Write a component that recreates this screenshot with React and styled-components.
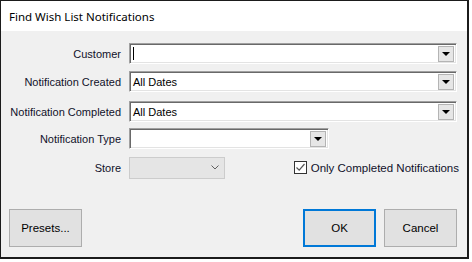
import React from 'react';
import styled, { createGlobalStyle } from 'styled-components';

const GlobalStyle = createGlobalStyle`
  html, body {
    margin: 0;
    padding: 0;
    background: #ffffff;
  }
  body {
    font-family: 'Liberation Sans', Arial, sans-serif;
  }
`;

const Window = styled.div`
  box-sizing: border-box;
  width: 469px;
  height: 259px;
  border: 1px solid #1b1b1b;
  border-right-width: 2px;
  border-bottom-width: 2px;
  background: #f0f0f0;
  display: flex;
  flex-direction: column;
`;

const TitleBar = styled.div`
  height: 30px;
  background: #ffffff;
  display: flex;
  align-items: center;
  padding-left: 8px;
  font-family: 'Noto Sans', 'Liberation Sans', sans-serif;
  font-size: 11.5px;
  color: #000;
`;

const Body = styled.div`
  flex: 1;
  display: flex;
  flex-direction: column;
  padding: 12px 10px 10px 0;
`;

const Row = styled.div`
  display: flex;
  align-items: center;
  height: 21px;
  margin-top: ${({ $top }) => $top || 0}px;
`;

const Label = styled.div`
  width: 120px;
  margin-right: 8px;
  text-align: right;
  font-size: 11px;
  color: #10102a;
  white-space: nowrap;
`;

const Combo = styled.div`
  box-sizing: border-box;
  width: ${({ $width }) => $width}px;
  height: 21px;
  background: #ffffff;
  border: 1px solid;
  border-color: #a0a0a0 #ffffff #ffffff #a0a0a0;
  box-shadow: inset 1px 1px 0 #696969, inset -1px -1px 0 #e3e3e3;
  display: flex;
  align-items: center;
  padding: 0 2px 0 3px;
  font-size: 11px;
  color: #000;
`;

const ComboText = styled.span`
  flex: 1;
  white-space: nowrap;
`;

const Caret = styled.span`
  flex: 1;
  &::before {
    content: '';
    display: block;
    width: 1px;
    height: 13px;
    background: #000;
  }
`;

const DropButton = styled.div`
  box-sizing: border-box;
  width: 16px;
  height: 16px;
  background: #e6e6e6;
  border: 1px solid #b4b4b4;
  display: flex;
  align-items: center;
  justify-content: center;
  &::after {
    content: '';
    width: 0;
    height: 0;
    border-left: 4px solid transparent;
    border-right: 4px solid transparent;
    border-top: 4px solid #000;
    margin-top: 1px;
  }
`;

const DisabledCombo = styled.div`
  box-sizing: border-box;
  width: 96px;
  height: 22px;
  background: #e5e5e5;
  border: 1px solid #cccccc;
  display: flex;
  align-items: center;
  justify-content: flex-end;
  padding-right: 5px;
`;

const CheckWrap = styled.label`
  margin-left: auto;
  margin-right: -2px;
  display: flex;
  align-items: center;
  gap: 4px;
  font-size: 11.5px;
  color: #10102a;
  white-space: nowrap;
`;

const CheckBox = styled.span`
  box-sizing: border-box;
  width: 13px;
  height: 13px;
  border: 1px solid #333333;
  background: #ffffff;
  display: flex;
  align-items: center;
  justify-content: center;
`;

const ButtonRow = styled.div`
  margin-top: auto;
  display: flex;
  align-items: center;
  padding-left: 8px;
  gap: 8px;
`;

const Button = styled.div`
  box-sizing: border-box;
  width: 73px;
  height: 38px;
  background: #e1e1e1;
  border: ${({ $default }) => ($default ? '2px solid #0078d7' : '1px solid #adadad')};
  display: flex;
  align-items: center;
  justify-content: center;
  font-size: 11.5px;
  color: #000;
  margin-left: ${({ $push }) => ($push ? 'auto' : '0')};
`;

const Select = ({ width, value, caret }) => (
  <Combo $width={width}>
    {caret ? <Caret /> : <ComboText>{value}</ComboText>}
    <DropButton />
  </Combo>
);

const App = () => (
  <>
    <GlobalStyle />
    <Window>
      <TitleBar>Find Wish List Notifications</TitleBar>
      <Body>
        <Row>
          <Label>Customer</Label>
          <Select width={328} caret />
        </Row>
        <Row $top={7}>
          <Label>Notification Created</Label>
          <Select width={328} value="All Dates" />
        </Row>
        <Row $top={9}>
          <Label>Notification Completed</Label>
          <Select width={328} value="All Dates" />
        </Row>
        <Row $top={6}>
          <Label>Notification Type</Label>
          <Select width={200} />
        </Row>
        <Row $top={8}>
          <Label>Store</Label>
          <DisabledCombo>
            <svg width="8" height="5" viewBox="0 0 8 5">
              <path d="M0.5 0.5 L4 4 L7.5 0.5" fill="none" stroke="#606060" strokeWidth="1" />
            </svg>
          </DisabledCombo>
          <CheckWrap>
            <CheckBox>
              <svg width="11" height="11" viewBox="0 0 11 11">
                <path d="M1.5 5.5 L4.2 8.2 L9.5 2" fill="none" stroke="#555555" strokeWidth="1.2" />
              </svg>
            </CheckBox>
            Only Completed Notifications
          </CheckWrap>
        </Row>
        <ButtonRow>
          <Button>Presets...</Button>
          <Button $push $default>OK</Button>
          <Button>Cancel</Button>
        </ButtonRow>
      </Body>
    </Window>
  </>
);

export default App;
